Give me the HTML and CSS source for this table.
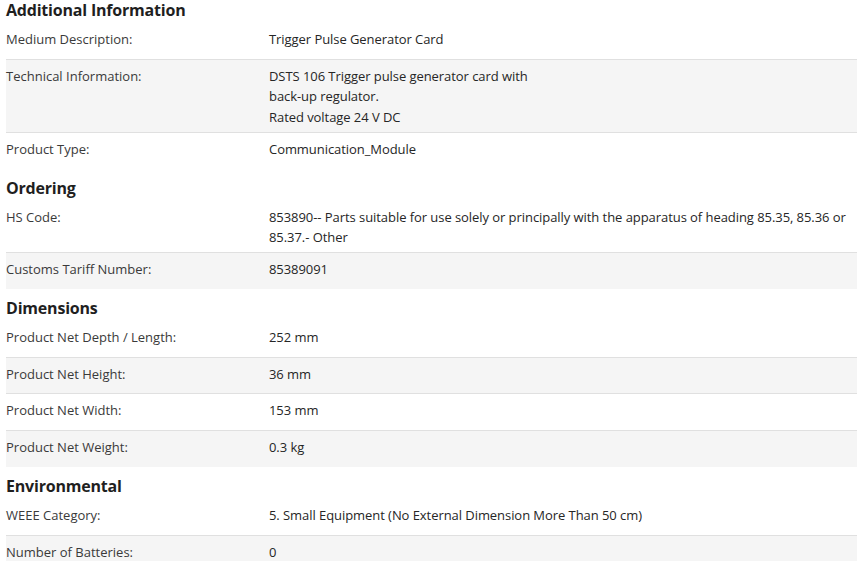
FILE: index.html
```html
<!DOCTYPE html>
<html lang="en">
<head>
<meta charset="utf-8">
<title>Product details</title>
<link rel="stylesheet" href="styles.css">
</head>
<body>
<div class="specs">
  <section class="section">
    <h2 class="section-title">Additional Information</h2>
    <div class="row"><div class="label">Medium Description:</div><div class="value">Trigger Pulse Generator Card</div></div>
    <div class="row alt"><div class="label">Technical Information:</div><div class="value">DSTS 106 Trigger pulse generator card with<br>back-up regulator.<br>Rated voltage 24 V DC</div></div>
    <div class="row"><div class="label">Product Type:</div><div class="value">Communication_Module</div></div>
  </section>
  <section class="section">
    <h2 class="section-title">Ordering</h2>
    <div class="row"><div class="label">HS Code:</div><div class="value">853890-- Parts suitable for use solely or principally with the apparatus of heading 85.35, 85.36 or 85.37.- Other</div></div>
    <div class="row alt"><div class="label">Customs Tariff Number:</div><div class="value">85389091</div></div>
  </section>
  <section class="section">
    <h2 class="section-title">Dimensions</h2>
    <div class="row"><div class="label">Product Net Depth / Length:</div><div class="value">252 mm</div></div>
    <div class="row alt"><div class="label">Product Net Height:</div><div class="value">36 mm</div></div>
    <div class="row"><div class="label">Product Net Width:</div><div class="value">153 mm</div></div>
    <div class="row alt"><div class="label">Product Net Weight:</div><div class="value">0.3 kg</div></div>
  </section>
  <section class="section">
    <h2 class="section-title">Environmental</h2>
    <div class="row"><div class="label">WEEE Category:</div><div class="value">5. Small Equipment (No External Dimension More Than 50 cm)</div></div>
    <div class="row alt"><div class="label">Number of Batteries:</div><div class="value">0</div></div>
  </section>
</div>
</body>
</html>
```

FILE: styles.css
```css
html, body {
  margin: 0;
  padding: 0;
  background: #ffffff;
}

body {
  font-family: "Open Sans", "Noto Sans", sans-serif;
  font-size: 13px;
  color: #262626;
}

.specs {
  padding-left: 6px;
}

.section {
  margin-top: 9px;
}

.section:first-child {
  margin-top: 0;
}

.section-title {
  margin: 0 0 3px;
  font-size: 16px;
  line-height: 20px;
  font-weight: 700;
  letter-spacing: -0.2px;
  color: #1f1f1f;
}

.row {
  display: grid;
  grid-template-columns: 263px 1fr;
  min-height: 35.7px;
  border-bottom: 1px solid #e0e0e0;
  background: #ffffff;
}

.row:last-child {
  border-bottom: none;
}

.row.alt {
  background: #f5f5f5;
}

.label,
.value {
  padding: 6px 0 5px;
  line-height: 20.4px;
}

.label {
  color: #3a3a3a;
}

.value {
  color: #262626;
  letter-spacing: -0.06px;
}
```
